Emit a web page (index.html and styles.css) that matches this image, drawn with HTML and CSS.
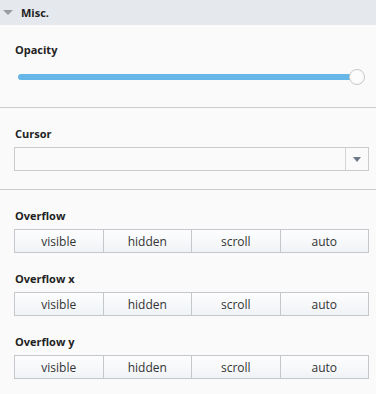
FILE: index.html
```html
<!DOCTYPE html>
<html>
<head>
    <title>Misc.</title>
    <link rel="stylesheet" href="styles.css">
</head>
<body>
    <div class="panel-header">
        <span class="caret"></span>
        <span class="panel-title">Misc.</span>
    </div>

    <div class="section">
        <div class="label">Opacity</div>
        <div class="slider">
            <div class="track"></div>
            <div class="thumb"></div>
        </div>
    </div>

    <div class="section">
        <div class="label">Cursor</div>
        <div class="select">
            <div class="select-value"></div>
            <div class="select-btn"><span class="arrow"></span></div>
        </div>
    </div>

    <div class="section">
        <div class="field">
            <div class="label">Overflow</div>
            <div class="btn-group">
                <button>visible</button>
                <button>hidden</button>
                <button>scroll</button>
                <button>auto</button>
            </div>
        </div>
        <div class="field">
            <div class="label">Overflow x</div>
            <div class="btn-group">
                <button>visible</button>
                <button>hidden</button>
                <button>scroll</button>
                <button>auto</button>
            </div>
        </div>
        <div class="field">
            <div class="label">Overflow y</div>
            <div class="btn-group">
                <button>visible</button>
                <button>hidden</button>
                <button>scroll</button>
                <button>auto</button>
            </div>
        </div>
    </div>
</body>
</html>
```

FILE: styles.css
```css
body {
    font-family: "Open Sans", "Noto Sans", sans-serif;
    margin: 0;
    background-color: #fafafa;
    color: #333;
}
.panel-header {
    display: flex;
    align-items: center;
    height: 25px;
    background-color: #e5e8ec;
}
.caret {
    width: 0;
    height: 0;
    margin-left: 3px;
    border-left: 5px solid transparent;
    border-right: 5px solid transparent;
    border-top: 5px solid #9a9ea3;
}
.panel-title {
    margin-left: 8px;
    font-size: 11px;
    font-weight: bold;
    color: #222;
}
.section {
    padding: 17px 7px 18px 14px;
    border-bottom: 1px solid #cccccc;
}
.section:last-child {
    border-bottom: none;
}
.label {
    font-size: 11px;
    line-height: 16px;
    font-weight: bold;
    color: #222;
    padding-left: 1px;
}
.slider {
    display: flex;
    align-items: center;
    height: 16px;
    margin: 11px 4px 4px 4px;
}
.track {
    flex: 1;
    height: 6px;
    border-radius: 3px;
    background-color: #67b6e8;
}
.thumb {
    width: 14px;
    height: 14px;
    margin-left: -8px;
    border: 1px solid #c8c8c8;
    border-radius: 50%;
    background-color: #fcfcfd;
}
.section + .section {
    padding-top: 18px;
}
.select {
    display: flex;
    height: 22px;
    margin-top: 5px;
    border: 1px solid #c9cccf;
    background-color: #fafafa;
}
.select-value {
    flex: 1;
}
.select-btn {
    width: 22px;
    border-left: 1px solid #d3d6d9;
    display: flex;
    align-items: center;
    justify-content: center;
}
.arrow {
    width: 0;
    height: 0;
    border-left: 4px solid transparent;
    border-right: 4px solid transparent;
    border-top: 5px solid #6c7885;
}
.field + .field {
    margin-top: 18px;
}
.btn-group {
    display: flex;
    margin-top: 5px;
    border: 1px solid #c4c8cc;
}
.btn-group button {
    flex: 1;
    height: 22px;
    padding: 0;
    border: none;
    border-left: 1px solid #c4c8cc;
    background: linear-gradient(#fdfdfe, #f0f3f6);
    font-family: "Open Sans", "Noto Sans", sans-serif;
    font-size: 12px;
    color: #333;
}
.btn-group button:first-child {
    border-left: none;
}
```
